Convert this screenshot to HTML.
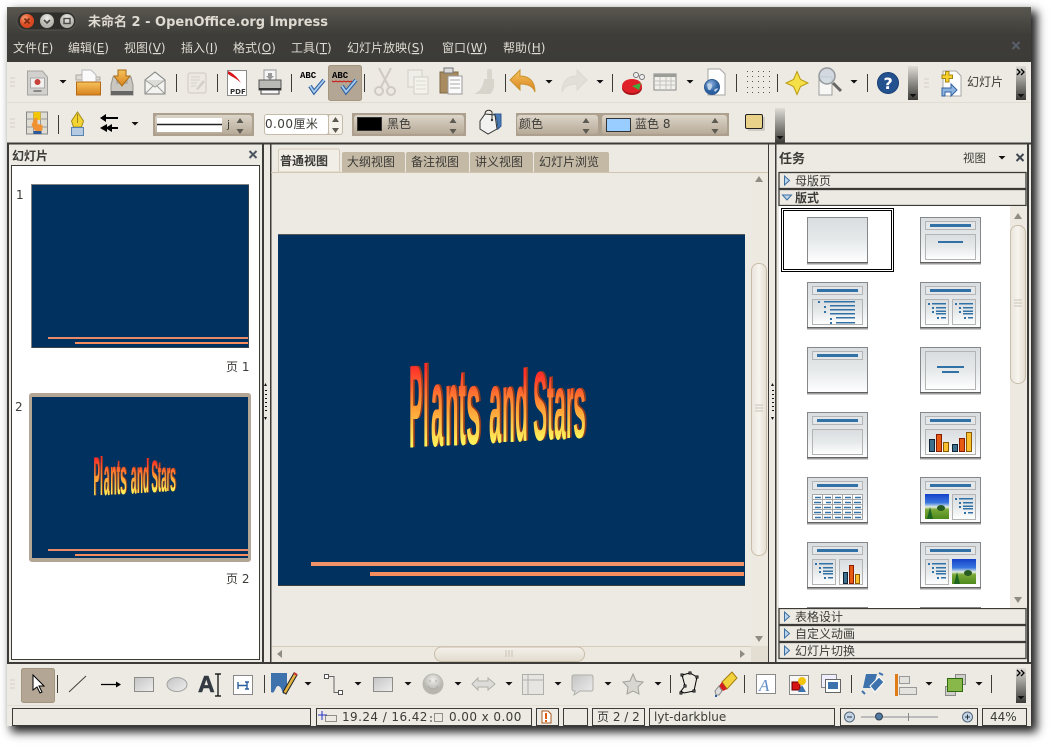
<!DOCTYPE html>
<html lang="zh"><head><meta charset="utf-8"><title>未命名 2 - OpenOffice.org Impress</title>
<style>
html,body{margin:0;padding:0;background:#fff;width:1054px;height:750px;overflow:hidden}
#sh{position:absolute;left:7px;top:7px;width:1024px;height:719px;box-shadow:5px 5px 9px 1px #1e1e1e}
svg{position:absolute;left:0;top:0}
text{font-family:"DejaVu Sans","WenQuanYi Zen Hei","Noto Sans CJK SC",sans-serif;font-size:12px;fill:#3c3b37}
.m{fill:#dfdbd2;font-size:12px}
.b{font-weight:bold}
.s{letter-spacing:.42px}
text.wa{font-family:"Liberation Sans",sans-serif;font-size:100px;font-weight:bold;fill:url(#wag)}
.ex text.wa{fill:#8f3b1e}
</style></head><body><div id="sh"></div>
<svg width="1054" height="750" viewBox="0 0 1054 750" xmlns="http://www.w3.org/2000/svg">
<defs>
<linearGradient id="tb" x1="0" y1="0" x2="0" y2="1"><stop offset="0" stop-color="#5a5750"/><stop offset=".5" stop-color="#3e3d39"/><stop offset="1" stop-color="#3c3b37"/></linearGradient>
<linearGradient id="tan" x1="0" y1="0" x2="0" y2="1"><stop offset="0" stop-color="#dcd5c9"/><stop offset="1" stop-color="#b7aa98"/></linearGradient>
<linearGradient id="ov" x1="0" y1="0" x2="0" y2="1"><stop offset="0" stop-color="#e0ddd7"/><stop offset="1" stop-color="#3c3b37"/></linearGradient>
<linearGradient id="th" x1="0" y1="0" x2="0" y2="1"><stop offset="0" stop-color="#d9dde0"/><stop offset=".5" stop-color="#e6e9ea"/><stop offset="1" stop-color="#fff"/></linearGradient>
<linearGradient id="gr" x1="0" y1="0" x2="1" y2="1"><stop offset="0" stop-color="#c4c4c4"/><stop offset="1" stop-color="#eee"/></linearGradient>
<linearGradient id="or" x1="0" y1="0" x2="0" y2="1"><stop offset="0" stop-color="#f6c35c"/><stop offset="1" stop-color="#d8821e"/></linearGradient>
<linearGradient id="bar" x1="0" y1="0" x2="1" y2="0"><stop offset="0" stop-color="#e9e4db"/><stop offset=".5" stop-color="#f7f4ee"/><stop offset="1" stop-color="#e4ddd1"/></linearGradient>
<linearGradient id="hbar" x1="0" y1="0" x2="0" y2="1"><stop offset="0" stop-color="#f5f2ec"/><stop offset="1" stop-color="#e2dbcf"/></linearGradient>
<linearGradient id="wag" x1="0" y1="0" x2="0" y2="1"><stop offset=".2" stop-color="#ff2f2a"/><stop offset=".5" stop-color="#ff9a35"/><stop offset=".8" stop-color="#fff35a"/></linearGradient>
<radialGradient id="glb" cx=".4" cy=".3"><stop offset="0" stop-color="#8fb4e0"/><stop offset="1" stop-color="#2a5f9f"/></radialGradient>
<radialGradient id="red" cx=".35" cy=".3"><stop offset="0" stop-color="#f59a70"/><stop offset="1" stop-color="#d9481f"/></radialGradient>
<radialGradient id="gry" cx=".5" cy=".3"><stop offset="0" stop-color="#f0efec"/><stop offset="1" stop-color="#b8b5ae"/></radialGradient>
<linearGradient id="sky" x1="0" y1="0" x2="0" y2="1"><stop offset="0" stop-color="#1440c8"/><stop offset=".35" stop-color="#3a78e0"/><stop offset=".52" stop-color="#e4eee0"/><stop offset=".62" stop-color="#7aa838"/><stop offset="1" stop-color="#4e8a1c"/></linearGradient>
<path id="dd" d="M-3.500 0h7l-3.500 3.500z" fill="#111"/>
<path id="spin" d="M-3.500-2h7l-3.500-5zM-3.500 4h7l-3.500 5z" fill="#5d5a52"/>
<symbol id="t0" width="62" height="49" overflow="visible"><rect x=".5" y=".5" width="60" height="45" fill="url(#th)" stroke="#85888a"/><path d="M0 46h61" stroke="#3c3b37" stroke-width="1"/><path d="M0 47.5h61" stroke="#ccc" stroke-width="1"/></symbol>
<symbol id="ti" width="62" height="49" overflow="visible"><rect x="5.5" y="4.5" width="50" height="8" fill="#e3e7e9" stroke="#b4b4b4"/><rect x="10" y="7" width="41" height="3" fill="#3271a6"/></symbol>
<symbol id="bx" width="62" height="49" overflow="visible"><rect x="5.5" y="17.5" width="50" height="25" fill="url(#th)" stroke="#b4b4b4"/></symbol>
<symbol id="bl" width="24" height="26" overflow="visible"><g fill="#3271a6"><rect x="3" y="3" width="2" height="2"/><rect x="7" y="3" width="14" height="1.5"/><rect x="7" y="7" width="2" height="2"/><rect x="11" y="7" width="10" height="1.5"/><rect x="7" y="11" width="2" height="2"/><rect x="11" y="10.5" width="10" height="1.5"/><rect x="11" y="13" width="10" height="1.5"/><rect x="12" y="17" width="2" height="2"/><rect x="16" y="17" width="5" height="1.5"/></g></symbol>
<symbol id="pic" width="24" height="26" overflow="visible"><rect width="24" height="25" fill="url(#sky)"/><path d="M2 25l3-12 3 12z" fill="#1d6420"/><ellipse cx="16" cy="14" rx="4" ry="3" fill="#275b22"/></symbol>
<symbol id="bars" width="24" height="26" overflow="visible"><rect x="4.500" y="12.500" width="4" height="11" fill="#3d6f8f" stroke="#123"/><rect x="10.500" y="5.500" width="4" height="18" fill="#e65a12" stroke="#8a1c00"/><rect x="16.500" y="14.500" width="4" height="9" fill="#fbc02d" stroke="#8a5a00"/></symbol>
</defs>

<!-- window -->
<rect x="7" y="7" width="1024" height="719" fill="#edeae3"/>
<rect x="7" y="7" width="1024" height="55" fill="url(#tb)"/>
<rect x="7" y="7" width="1024" height="1" fill="#5f5c55"/>
<rect x="17" y="12" width="59" height="18" rx="9" fill="#2f2e2b" stroke="#55534d"/>
<circle cx="27" cy="21" r="7" fill="url(#red)"/><path d="M24.500 18.500l5 5m0-5l-5 5" stroke="#7a2c12" stroke-width="1.800"/>
<circle cx="47" cy="21" r="7" fill="url(#gry)"/><path d="M44 20l3 3 3-3" stroke="#4a4944" stroke-width="1.600" fill="none"/>
<circle cx="67" cy="21" r="7" fill="url(#gry)"/><rect x="64" y="18.500" width="6" height="5" fill="none" stroke="#4a4944" stroke-width="1.400"/>
<text x="88" y="26" class="b" style="font-size:13px;fill:#dfdbd2">未命名 2 - OpenOffice.org Impress</text>
<text class="m" x="13" y="52">文件(<tspan text-decoration="underline">F</tspan>)</text>
<text class="m" x="68" y="52">编辑(<tspan text-decoration="underline">E</tspan>)</text>
<text class="m" x="124" y="52">视图(<tspan text-decoration="underline">V</tspan>)</text>
<text class="m" x="181" y="52">插入(<tspan text-decoration="underline">I</tspan>)</text>
<text class="m" x="233" y="52">格式(<tspan text-decoration="underline">O</tspan>)</text>
<text class="m" x="291" y="52">工具(<tspan text-decoration="underline">T</tspan>)</text>
<text class="m" x="347" y="52">幻灯片放映(<tspan text-decoration="underline">S</tspan>)</text>
<text class="m" x="442" y="52">窗口(<tspan text-decoration="underline">W</tspan>)</text>
<text class="m" x="503" y="52">帮助(<tspan text-decoration="underline">H</tspan>)</text>
<path d="M1012.500 42l7 7m0-7l-7 7" stroke="#59606a" stroke-width="2"/>

<!-- toolbar lines -->
<path d="M7 102.500h1024" stroke="#e2ddd2"/>
<path d="M7 143.500h1024" stroke="#3c3b37" stroke-width="2"/>
<path d="M7 663h1024" stroke="#3c3b37" stroke-width="2"/>
<path d="M7 705.500h1024" stroke="#e2ddd2"/>
<!-- grips -->
<g stroke="#d5d0c5"><path d="M10 78h5M10 82h5M10 86h5M10 119h5M10 123h5M10 127h5M10 680h5M10 684h5M10 688h5M924 79h5M924 83h5M924 87h5"/></g>
<!-- separators -->
<path d="M176.500 74v18M217.500 74v18M291.500 74v18M364.500 74v18M505.500 74v18M612.500 74v18M736.500 74v18M777.500 74v18M867.500 74v18M58.500 115v19M57.500 675v18M264.500 675v18M670.500 675v18M744.500 675v18M851.500 675v18M991.500 675v18" stroke="#3c3b37"/>
<!-- overflow -->
<rect x="908" y="66" width="10" height="34" fill="url(#ov)"/><use href="#dd" x="913" y="94"/>
<rect x="1016" y="66" width="10" height="34" fill="url(#ov)"/><use href="#dd" x="1021" y="94"/>
<rect x="775" y="108" width="10" height="35" fill="url(#ov)"/><use href="#dd" x="780" y="136"/>
<rect x="1016" y="668" width="10" height="35" fill="url(#ov)"/><use href="#dd" x="1021" y="696"/>
<path d="M1017 69l3 3-3 3M1021 69l3 3-3 3M1017 670l3 3-3 3M1021 670l3 3-3 3" fill="none" stroke="#000" stroke-width="1.300"/>
<rect x="328.500" y="65.500" width="33" height="35" rx="2" fill="#b3a695" stroke="#a4967f"/>
<rect x="21.500" y="668.500" width="33" height="34" rx="2" fill="#b3a695" stroke="#a4967f"/>

<!-- dropdown arrows -->
<use href="#dd" x="63" y="80"/><use href="#dd" x="549" y="80"/><use href="#dd" x="600" y="80"/><use href="#dd" x="690" y="80"/><use href="#dd" x="854" y="80"/><use href="#dd" x="135" y="122"/>
<use href="#dd" x="308" y="682"/><use href="#dd" x="358" y="682"/><use href="#dd" x="408" y="682"/><use href="#dd" x="458" y="682"/><use href="#dd" x="509" y="682"/><use href="#dd" x="558" y="682"/><use href="#dd" x="608" y="682"/><use href="#dd" x="658" y="682"/><use href="#dd" x="929" y="682"/><use href="#dd" x="979" y="682"/>

<!-- toolbar1 icons -->
<g transform="translate(37.500,83)"><path d="M-10-12H5l5 6v18H-10z" fill="#d2d1cd" stroke="#a5a4a0"/><rect x="-7" y="-5" width="14" height="10" fill="#f2f0ee" stroke="#aaa"/><circle cx="0" cy="-1" r="3" fill="#c8413a"/><path d="M-4 8h8" stroke="#888" stroke-width="2"/></g>
<g transform="translate(89,83)"><path d="M-13-8h5l2-3H-1v5h12v3h-24z" fill="#e0dbd0" stroke="#aaa"/><path d="M-7-13H2l5 5V0H-7z" fill="#fafafa" stroke="#bbb"/><rect x="-12.500" y="-1" width="24" height="13" fill="url(#or)" stroke="#b46a14"/></g>
<g transform="translate(122,83)"><path d="M-11 2l2-8h4v6h10v-6h4l2 8v10h-22z" fill="#c9c7c0" stroke="#95938c"/><rect x="-11" y="8" width="22" height="4" fill="#666"/><path d="M-4-13h8v6h4L0 3-8-7h4z" fill="url(#or)" stroke="#a96a10"/></g>
<g transform="translate(155,83)"><path d="M-10-3L0-11 10-3V11H-10z" fill="#f3f3f1" stroke="#7d7d7b"/><path d="M-10-3L0 4 10-3M-10 11L-2 3M10 11L2 3" fill="#dcdcd9" stroke="#9d9d9a"/></g>
<g transform="translate(197,83)"><rect x="-9" y="-10" width="18" height="20" rx="2" fill="#ece9e3" stroke="#cfcbc2"/><path d="M-6-6h9M-6-3h9M-6 0h6M-6 3h5" stroke="#d5d1c8"/><path d="M-1 6l7-9 2 2-7 8z" fill="#d4d0c8"/></g>
<g transform="translate(237,83)"><rect x="-9.500" y="-12.500" width="19" height="25" fill="#fff" stroke="#8c8c8a"/><path d="M-9-12c5 2 10 7 13 12-5-5-9-6-13-9z" fill="#d6141a"/><text x="-7" y="11" style="font-size:7px;font-weight:bold;fill:#333">PDF</text></g>
<g transform="translate(270,82)"><rect x="-6" y="-12" width="12" height="11" fill="#f5f5f5" stroke="#999"/><path d="M-2-9h4v3h2l-4 4-4-4h2z" fill="#999"/><path d="M-11-2h22v10h-22z" fill="#b9b9b6" stroke="#555"/><rect x="-9" y="8" width="18" height="4" fill="#f7f7f7" stroke="#444"/><path d="M-11 7h22" stroke="#333" stroke-width="2"/></g>
<g transform="translate(312,82)"><text x="-12" y="-4" style="font-size:9px;font-weight:bold;fill:#000;font-family:'Liberation Mono',monospace">ABC</text><path d="M-2 4l4 6L12-2" fill="none" stroke="#2f5f9f" stroke-width="4"/><path d="M-2 4l4 6L12-2" fill="none" stroke="#a8cdf0" stroke-width="1.800"/></g>
<g transform="translate(344,82)"><text x="-12" y="-4" style="font-size:9px;font-weight:bold;fill:#000;font-family:'Liberation Mono',monospace">ABC</text><path d="M-12-1l2 1 2-1 2 1 2-1 2 1 2-1 2 1 2-1 2 1 2-1" fill="none" stroke="#d01010"/><path d="M-2 4l4 6L12-2" fill="none" stroke="#2f5f9f" stroke-width="4"/><path d="M-2 4l4 6L12-2" fill="none" stroke="#a8cdf0" stroke-width="1.800"/></g>
<g transform="translate(385,82)" fill="none" stroke="#cfcbc3" stroke-width="2"><path d="M-6-14L4 5M6-14L-4 5"/><circle cx="-6" cy="9" r="4"/><circle cx="6" cy="9" r="4"/></g>
<g transform="translate(418,82)"><rect x="-10" y="-12" width="14" height="17" fill="#f0eee9" stroke="#d2cfc7"/><rect x="-4" y="-5" width="14" height="17" fill="#f4f2ed" stroke="#d2cfc7"/><path d="M-2-1h10M-2 3h10M-2 7h10" stroke="#dcd9d1"/></g>
<g transform="translate(451,82)"><rect x="-11" y="-10" width="18" height="21" fill="#a98b60" stroke="#7e6846"/><rect x="-7" y="-14" width="9" height="5" fill="#ddd" stroke="#777"/><rect x="-3" y="-6" width="14" height="18" fill="#fbfbfb" stroke="#999"/><path d="M-1-2h10M-1 2h10M-1 6h10" stroke="#aaa"/></g>
<g transform="translate(484,82)"><rect x="3" y="-13" width="5" height="11" rx="2" fill="#d9d6ce"/><path d="M0-3h10v6c0 4-2 8-4 9H-10c5-2 9-6 10-15z" fill="#d7d4cc"/></g>
<g transform="translate(523,82)"><path d="M-13-2L-3-12V-6c8 0 15 4 15 16-2-5-6-8-15-8V8z" fill="url(#or)" stroke="#c99330"/></g>
<g transform="translate(574,82)"><path d="M13-2L3-12V-6c-8 0-15 4-15 16 2-5 6-8 15-8V8z" fill="#e2dfd8" stroke="#dcd9d1"/></g>
<g transform="translate(632,83)"><ellipse cx="0" cy="5" rx="10" ry="7" fill="#a8141a"/><ellipse cx="0" cy="3" rx="10" ry="7" fill="#e02028"/><path d="M0 3L9 0 7 7z" fill="#3fae3c"/><circle cx="4" cy="-8" r="2.500" fill="#eee" stroke="#777"/><circle cx="10" cy="-6" r="2.500" fill="#eee" stroke="#777"/></g>
<g transform="translate(665,82)"><rect x="-11" y="-8" width="22" height="16" fill="#f1f0ec" stroke="#888"/><rect x="-11" y="-8" width="22" height="3" fill="#9d9d98"/><path d="M-11-1h22M-11 3h22M-5-5V8M1-5V8M6-5V8" stroke="#c4c2bc"/></g>
<g transform="translate(716,83)"><path d="M-8-14H4l5 5V12H-8z" fill="#fff" stroke="#a5a5a3"/><circle cx="-4" cy="4" r="7.500" fill="url(#glb)" stroke="#2c5a92"/><path d="M-9 1c3-2 6 0 5 3s-3 4-4 2zM-2 7c2-2 4-2 4-1l-3 3z" fill="#bcd0e6"/></g>
<g fill="#55534c"><path d="M747 71h1v1h-1zM758 71h1v1h-1zM769 71h1v1h-1zM747 81h1v1h-1zM758 81h1v1h-1zM769 81h1v1h-1zM747 92h1v1h-1zM758 92h1v1h-1zM769 92h1v1h-1zM752 71h1v1h-1zM763 71h1v1h-1zM752 81h1v1h-1zM763 81h1v1h-1zM752 92h1v1h-1zM763 92h1v1h-1zM747 76h1v1h-1zM752 76h1v1h-1zM758 76h1v1h-1zM763 76h1v1h-1zM769 76h1v1h-1zM747 87h1v1h-1zM752 87h1v1h-1zM758 87h1v1h-1zM763 87h1v1h-1zM769 87h1v1h-1z"/></g>
<g transform="translate(797,83)"><path d="M0-11.500L3.500-3.500 11 0 3.500 3.500 0 11.500-3.500 3.500-11 0-3.500-3.500z" fill="#f6e04a" stroke="#b99b10"/></g>
<g transform="translate(830,82)"><rect x="-11" y="-5" width="13" height="18" fill="#f7f7f5" stroke="#9d9d9a"/><circle cx="-3" cy="-6" r="8" fill="#cbd5de" fill-opacity=".8" stroke="#95989a" stroke-width="1.500"/><path d="M3 1l8 8" stroke="#666" stroke-width="3"/></g>
<g transform="translate(888,83)"><circle r="10.500" fill="#23528f" stroke="#1a3f74"/><text x="-4.500" y="6" style="font-size:16px;font-weight:bold;fill:#fff">?</text></g>
<g transform="translate(950,83)"><path d="M-7-12H6l5 5V13H-7z" fill="#fff" stroke="#a5a5a3"/><path d="M-8-8h3.500v-3.500h3.500v3.500h3.500v3.500h-3.500v3.500h-3.500v-3.500h-3.500z" fill="#f8d02c" stroke="#a68713"/><path d="M-8 5h9V1l6 6-6 6V9H-5v4h-3z" fill="#8db3e0" stroke="#33639e"/></g>
<text x="967" y="86">幻灯片</text>

<!-- toolbar2 -->
<g transform="translate(36.500,123)"><rect x="-10" y="-11" width="21" height="22" fill="#dfdcd3" stroke="#888"/><path d="M-3-11v22M4-11v22M-10-4h21M-10 4h21" stroke="#999"/><rect x="-3" y="-11" width="7" height="8" fill="#f2c70a"/><path d="M-2-5h3v6l5 1v5c-2 2-6 2-8 0l-3-5z" fill="#f09232"/><rect x="-3" y="8" width="8" height="3" fill="#2e5a9a"/></g>
<g transform="translate(77.500,124)"><path d="M0-12L6-3 4 3h-8L-6-3z" fill="#f4d432" stroke="#a58a1c"/><path d="M0-10V-1" stroke="#a58a1c"/><rect x="-6" y="3.500" width="12" height="8" fill="#b5cbe2" stroke="#5a82ae"/></g>
<path d="M100 118l6-4v3h12v2h-12v3zM100 128l7-4v3l5-3v3h6v2h-6v3l-5-3v3z" fill="#000"/>
<rect x="153" y="113" width="101" height="23" fill="#ada08f"/><rect x="155" y="115" width="97" height="19" rx="3" fill="url(#tan)"/>
<rect x="157" y="118" width="65" height="14" fill="#fff"/><path d="M157 124.500h65" stroke="#222" stroke-width="1.500"/>
<text x="227" y="128" style="font-size:11px">j</text><use href="#spin" x="240" y="125"/>
<rect x="264" y="114" width="79" height="21" rx="3" fill="#c5bba9"/><rect x="265" y="115" width="63" height="19" rx="2" fill="#fff"/><rect x="329" y="115" width="13" height="19" rx="2" fill="#f5f2ec"/><use href="#spin" x="335.500" y="124"/>
<text x="265" y="128" class="s">0.00厘米</text>
<rect x="352" y="113" width="114" height="23" fill="#ada08f"/><rect x="354" y="115" width="110" height="19" rx="3" fill="url(#tan)"/>
<rect x="357.500" y="117.500" width="24" height="13" fill="#000" stroke="#333"/><text x="387" y="128">黑色</text><use href="#spin" x="453" y="125"/>
<g transform="translate(489,123)"><path d="M5-9h7v12l-3 3-1-9z" fill="#4a78b0" stroke="#2c5a92"/><path d="M-9-2L-4-9 6-8 8 6-1 11-9 6z" fill="#f2f2f0" stroke="#333"/><path d="M-4-9c0-4 5-5 7-2l0 7" fill="none" stroke="#333"/><circle cx="3" cy="-3" r="1.200" fill="#333"/></g>
<rect x="516" y="113" width="84" height="23" fill="#ada08f"/><rect x="517" y="115" width="81" height="19" rx="3" fill="url(#tan)"/><text x="519" y="128">颜色</text><use href="#spin" x="586" y="125"/>
<rect x="600" y="113" width="129" height="23" fill="#ada08f"/><rect x="602" y="115" width="125" height="19" rx="3" fill="url(#tan)"/>
<rect x="606.500" y="118.500" width="24" height="13" fill="#9cf" stroke="#333"/><text x="635" y="128">蓝色 8</text><use href="#spin" x="715" y="125"/>
<rect x="745.500" y="114.500" width="17" height="14" rx="1.500" fill="#e9d18a" stroke="#222"/><path d="M748 130h16v-13" stroke="#b5b0a5" fill="none"/>

<!-- left panel -->
<rect x="7" y="144" width="2" height="519" fill="#3c3b37"/>
<text x="12" y="160" class="b">幻灯片</text>
<path d="M249.500 151l7 7m0-7l-7 7" stroke="#4c5460" stroke-width="2"/>
<rect x="11.500" y="165.500" width="248" height="494" fill="#fff" stroke="#3c3b37"/>
<rect x="262" y="144" width="2" height="519" fill="#3c3b37"/>
<text x="16" y="199">1</text>
<rect x="31.500" y="184.500" width="217" height="163" fill="#00315f" stroke="#7f8080"/><path d="M32 347.500h217M248.500 185v162" stroke="#34424f"/>
<rect x="48" y="337" width="200" height="2" fill="#e98a66"/><rect x="75" y="342" width="173" height="2" fill="#f78c5e"/>
<text x="226" y="371">页 1</text>
<text x="15" y="411">2</text>
<rect x="29" y="393" width="222" height="169" rx="3" fill="#b3a695"/>
<rect x="32" y="397" width="216" height="161" fill="#00315f"/>
<rect x="48" y="549" width="200" height="2" fill="#e98a66"/><rect x="75" y="554" width="173" height="2" fill="#f78c5e"/>
<text x="226" y="583">页 2</text>

<!-- thumb wordart -->
<g transform="translate(93.500,458) scale(.466,.466) translate(-409,-367)">
<g class="ex" transform="translate(2,-.5)">
<text class="wa" transform="translate(409,447.500) scale(.2,1.18)">P</text><text class="wa" transform="translate(423,446.700) scale(.2,1.15)">l</text><text class="wa" transform="translate(431,446.200) scale(.22,1.14)">a</text><text class="wa" transform="translate(445,445.300) scale(.22,1.12)">n</text><text class="wa" transform="translate(458.500,444.500) scale(.22,1.1)">t</text><text class="wa" transform="translate(466,444) scale(.26,1.08)">s</text><text class="wa" transform="translate(489,442.700) scale(.22,1.05)">a</text><text class="wa" transform="translate(502,441.900) scale(.21,1.03)">n</text><text class="wa" transform="translate(515,441.100) scale(.21,1.01)">d</text><text class="wa" transform="translate(533,440) scale(.21,.98)">S</text><text class="wa" transform="translate(547,439.200) scale(.2,.96)">t</text><text class="wa" transform="translate(554,438.800) scale(.21,.95)">a</text><text class="wa" transform="translate(566,438) scale(.19,.93)">r</text><text class="wa" transform="translate(573,437.600) scale(.23,.915)">s</text>
</g>
<text class="wa" transform="translate(409,447.500) scale(.2,1.18)">P</text><text class="wa" transform="translate(423,446.700) scale(.2,1.15)">l</text><text class="wa" transform="translate(431,446.200) scale(.22,1.14)">a</text><text class="wa" transform="translate(445,445.300) scale(.22,1.12)">n</text><text class="wa" transform="translate(458.500,444.500) scale(.22,1.1)">t</text><text class="wa" transform="translate(466,444) scale(.26,1.08)">s</text><text class="wa" transform="translate(489,442.700) scale(.22,1.05)">a</text><text class="wa" transform="translate(502,441.900) scale(.21,1.03)">n</text><text class="wa" transform="translate(515,441.100) scale(.21,1.01)">d</text><text class="wa" transform="translate(533,440) scale(.21,.98)">S</text><text class="wa" transform="translate(547,439.200) scale(.2,.96)">t</text><text class="wa" transform="translate(554,438.800) scale(.21,.95)">a</text><text class="wa" transform="translate(566,438) scale(.19,.93)">r</text><text class="wa" transform="translate(573,437.600) scale(.23,.915)">s</text>
</g>

<!-- main panel -->
<rect x="270" y="144" width="1.500" height="519" fill="#3c3b37"/>
<path d="M271 172.500h498" stroke="#cfc4ae"/>
<path d="M278.500 172v-21q0-2 2-2h57q2 0 2 2v21z" fill="#f1eee8" stroke="#d6ccba"/>
<g fill="#c4b9a5"><path d="M342 172v-18q0-2 2-2h59q2 0 2 2v18z"/><path d="M406 172v-18q0-2 2-2h59q2 0 2 2v18z"/><path d="M470 172v-18q0-2 2-2h59q2 0 2 2v18z"/><path d="M534 172v-18q0-2 2-2h71q2 0 2 2v18z"/></g>
<text x="280" y="165" class="b">普通视图</text>
<text x="347" y="166">大纲视图</text><text x="411" y="166">备注视图</text><text x="475" y="166">讲义视图</text><text x="539" y="166">幻灯片浏览</text>
<rect x="278" y="234.500" width="467" height="351" fill="#00315f"/><path d="M278 234.500h467" stroke="#55595c"/><path d="M278 585.500h467" stroke="#3b3f42"/>
<rect x="311" y="562" width="433" height="4" fill="#f09368"/><rect x="370" y="572" width="374" height="4" fill="#f78c5e"/>

<g class="ex" transform="translate(1.800,-.5)">
<text class="wa" transform="translate(409,447.500) scale(.2,1.18)">P</text><text class="wa" transform="translate(423,446.700) scale(.2,1.15)">l</text><text class="wa" transform="translate(431,446.200) scale(.22,1.14)">a</text><text class="wa" transform="translate(445,445.300) scale(.22,1.12)">n</text><text class="wa" transform="translate(458.500,444.500) scale(.22,1.1)">t</text><text class="wa" transform="translate(466,444) scale(.26,1.08)">s</text><text class="wa" transform="translate(489,442.700) scale(.22,1.05)">a</text><text class="wa" transform="translate(502,441.900) scale(.21,1.03)">n</text><text class="wa" transform="translate(515,441.100) scale(.21,1.01)">d</text><text class="wa" transform="translate(533,440) scale(.21,.98)">S</text><text class="wa" transform="translate(547,439.200) scale(.2,.96)">t</text><text class="wa" transform="translate(554,438.800) scale(.21,.95)">a</text><text class="wa" transform="translate(566,438) scale(.19,.93)">r</text><text class="wa" transform="translate(573,437.600) scale(.23,.915)">s</text>
</g>
<text class="wa" transform="translate(409,447.500) scale(.2,1.18)">P</text><text class="wa" transform="translate(423,446.700) scale(.2,1.15)">l</text><text class="wa" transform="translate(431,446.200) scale(.22,1.14)">a</text><text class="wa" transform="translate(445,445.300) scale(.22,1.12)">n</text><text class="wa" transform="translate(458.500,444.500) scale(.22,1.1)">t</text><text class="wa" transform="translate(466,444) scale(.26,1.08)">s</text><text class="wa" transform="translate(489,442.700) scale(.22,1.05)">a</text><text class="wa" transform="translate(502,441.900) scale(.21,1.03)">n</text><text class="wa" transform="translate(515,441.100) scale(.21,1.01)">d</text><text class="wa" transform="translate(533,440) scale(.21,.98)">S</text><text class="wa" transform="translate(547,439.200) scale(.2,.96)">t</text><text class="wa" transform="translate(554,438.800) scale(.21,.95)">a</text><text class="wa" transform="translate(566,438) scale(.19,.93)">r</text><text class="wa" transform="translate(573,437.600) scale(.23,.915)">s</text>

<!-- main scrollbars -->
<rect x="751" y="173" width="17" height="473" fill="#eee9e0"/>
<rect x="751.500" y="263.500" width="15" height="292" rx="7" fill="url(#bar)" stroke="#c8bda8"/>
<path d="M755 182h8l-4-6zM755 636h8l-4 6z" fill="#8f8c84"/>
<path d="M755 405h8M755 408h8M755 411h8" stroke="#c9c3b6"/>
<rect x="272" y="646" width="479" height="16" fill="#eee9e0"/><path d="M272 646.500h479" stroke="#d6ccba"/>
<rect x="434.500" y="647" width="150" height="14.500" rx="7" fill="url(#hbar)" stroke="#c8bda8"/>
<path d="M282 650v8l-5-4zM740 650v8l5-4z" fill="#8f8c84"/>
<path d="M506 650v7M509 650v7M512 650v7" stroke="#c9c3b6"/>
<rect x="751" y="646" width="17" height="16" fill="#e3ddd2"/>
<path d="M768.500 144v519" stroke="#3c3b37"/>
<!-- splitter handles -->
<g fill="#111"><path d="M264 386h3l-1.500-3zM264 417h3l-1.500 3zM771 386h3l-1.500-3zM771 417h3l-1.500 3z"/><path d="M265 390h2v1h-2zM265 394h2v1h-2zM265 398h2v1h-2zM265 402h2v1h-2zM265 406h2v1h-2zM265 410h2v1h-2zM772 390h2v1h-2zM772 394h2v1h-2zM772 398h2v1h-2zM772 402h2v1h-2zM772 406h2v1h-2zM772 410h2v1h-2z"/></g>

<!-- task panel -->
<rect x="775" y="144" width="1.500" height="519" fill="#3c3b37"/>
<rect x="1027" y="144" width="2" height="519" fill="#3c3b37"/>
<text x="779" y="163" class="b" style="font-size:13px">任务</text>
<text x="963" y="162" style="font-size:11.500px">视图</text><use href="#dd" x="1002" y="156"/>
<path d="M1016.500 154l7 7m0-7l-7 7" stroke="#3f4650" stroke-width="2"/>
<g fill="#edeae3" stroke="#3c3b37" stroke-width="1.300"><rect x="779" y="172.500" width="247" height="16"/><rect x="779" y="189.500" width="247" height="16"/><rect x="779" y="608.500" width="247" height="16"/><rect x="779" y="625.500" width="247" height="16"/><rect x="779" y="642.500" width="247" height="16"/></g>
<g fill="#bcd5ee" stroke="#3d6f9f"><path d="M784.500 176v9l5-4.500zM784.500 612v9l5-4.500zM784.500 629v9l5-4.500zM784.500 646v9l5-4.500z"/><path d="M782.500 195h9l-4.500 5z"/></g>
<text x="795" y="185">母版页</text><text x="795" y="202" class="b">版式</text><text x="795" y="621">表格设计</text><text x="795" y="638">自定义动画</text><text x="795" y="655">幻灯片切换</text>
<rect x="779" y="206" width="231" height="402" fill="#fff"/>
<rect x="1010" y="206" width="16" height="402" fill="#eee9e0"/>
<rect x="1010.500" y="225.500" width="15" height="158" rx="7" fill="url(#bar)" stroke="#c8bda8"/>
<path d="M1014 219h8l-4-6zM1014 597h8l-4 6z" fill="#8f8c84"/>
<path d="M1014 300h8M1014 303h8M1014 306h8" stroke="#c9c3b6"/>
<rect x="781.500" y="208.500" width="112" height="63" fill="none" stroke="#000"/><rect x="783.500" y="210.500" width="108" height="59" fill="none" stroke="#000"/>

<!-- layout thumbs -->
<use href="#t0" x="807" y="217"/>
<use href="#t0" x="920" y="217"/><use href="#ti" x="920" y="217"/><use href="#bx" x="920" y="217"/><rect x="938" y="241" width="25" height="2" fill="#3271a6"/>
<use href="#t0" x="807" y="282"/><use href="#ti" x="807" y="282"/><use href="#bx" x="807" y="282"/>
<g fill="#3271a6"><rect x="818" y="301" width="2" height="2"/><rect x="824" y="301" width="31" height="1.500"/><rect x="824" y="306" width="2" height="2"/><rect x="830" y="305" width="25" height="1.500"/><rect x="830" y="309" width="25" height="1.500"/><rect x="824" y="311" width="2" height="2"/><rect x="830" y="313" width="25" height="1.500"/><rect x="830" y="318" width="2" height="2"/><rect x="836" y="317" width="19" height="1.500"/><rect x="830" y="322" width="2" height="2"/><rect x="836" y="322" width="19" height="1.500"/></g>
<use href="#t0" x="920" y="282"/><use href="#ti" x="920" y="282"/><rect x="925.500" y="299.500" width="23" height="25" fill="url(#th)" stroke="#b4b4b4"/><rect x="952.500" y="299.500" width="23" height="25" fill="url(#th)" stroke="#b4b4b4"/><use href="#bl" x="925" y="300"/><use href="#bl" x="952" y="300"/>
<use href="#t0" x="807" y="347"/><use href="#ti" x="807" y="347"/>
<use href="#t0" x="920" y="347"/><rect x="925.500" y="351.500" width="50" height="38" fill="url(#th)" stroke="#b4b4b4"/><rect x="937" y="366" width="27" height="2" fill="#3271a6"/><rect x="942" y="371" width="17" height="2" fill="#3271a6"/>
<use href="#t0" x="807" y="412"/><use href="#ti" x="807" y="412"/><use href="#bx" x="807" y="412"/>
<use href="#t0" x="920" y="412"/><use href="#ti" x="920" y="412"/><use href="#bx" x="920" y="412"/>
<g stroke-width="1"><rect x="929.500" y="439.500" width="5" height="12" fill="#3d6f8f" stroke="#123"/><rect x="936.500" y="434.500" width="5" height="17" fill="#e65a12" stroke="#8a1c00"/><rect x="943.500" y="442.500" width="5" height="9" fill="#fbc02d" stroke="#8a5a00"/><rect x="952.500" y="444.500" width="5" height="7" fill="#3d6f8f" stroke="#123"/><rect x="959.500" y="438.500" width="5" height="13" fill="#e65a12" stroke="#8a1c00"/><rect x="966.500" y="432.500" width="5" height="19" fill="#fbc02d" stroke="#8a5a00"/></g>
<use href="#t0" x="807" y="477"/><use href="#ti" x="807" y="477"/>
<rect x="812.500" y="494.500" width="50" height="25" fill="#fff" stroke="#a5a5a5"/><path d="M812 499.500h51M812 504.500h51M812 509.500h51M812 514.500h51M822.500 494v26M832.500 494v26M842.500 494v26M852.500 494v26" stroke="#a5a5a5"/>
<path d="M815 497.500h6M825 497.500h6M835 497.500h6M845 497.500h6M855 497.500h6M814 502.500h7M826 502.500h5M834 502.500h7M845 502.500h6M854 502.500h7M815 507.500h6M824 507.500h7M835 507.500h6M844 507.500h7M855 507.500h6M814 512.500h7M825 512.500h6M834 512.500h7M845 512.500h6M854 512.500h7M815 517.500h6M824 517.500h7M835 517.500h6M844 517.500h7M855 517.500h6" stroke="#3271a6" stroke-width="1.500"/>
<use href="#t0" x="920" y="477"/><use href="#ti" x="920" y="477"/><use href="#pic" x="925" y="494"/><rect x="952.500" y="494.500" width="23" height="25" fill="url(#th)" stroke="#b4b4b4"/><use href="#bl" x="952" y="495"/>
<use href="#t0" x="807" y="542"/><use href="#ti" x="807" y="542"/><rect x="812.500" y="559.500" width="23" height="25" fill="url(#th)" stroke="#b4b4b4"/><rect x="839.500" y="559.500" width="23" height="25" fill="url(#th)" stroke="#b4b4b4"/><use href="#bl" x="812" y="560"/><use href="#bars" x="839" y="560"/>
<use href="#t0" x="920" y="542"/><use href="#ti" x="920" y="542"/><rect x="925.500" y="559.500" width="23" height="25" fill="url(#th)" stroke="#b4b4b4"/><use href="#bl" x="925" y="560"/><use href="#pic" x="952" y="559"/>
<path d="M807 607.500h61M920 607.500h61" stroke="#85888a"/>

<!-- toolbar 3 -->
<path d="M33 675v15l4-3 3 6 2-1-3-6h5z" fill="#fff" stroke="#000"/>
<path d="M69 692l17-16" stroke="#444" stroke-width="1"/>
<path d="M101 684.500h17" stroke="#000" stroke-width="1.300"/><path d="M116 681.500l5 3-5 3z" fill="#000"/>
<rect x="134.500" y="677.500" width="19" height="14" fill="url(#gr)" stroke="#8c8c88"/>
<ellipse cx="177" cy="684.500" rx="10" ry="7" fill="url(#gr)" stroke="#a3a3a0"/>
<text x="198" y="692" style="font-size:23px;font-weight:bold;fill:#333a42;stroke:#333a42;stroke-width:.6;font-family:'Liberation Sans',sans-serif">A</text><path d="M215 674h6m-3 0v22m-3 0h6" stroke="#000" stroke-width="1.200" fill="none"/>
<rect x="233.500" y="675.500" width="19" height="19" fill="#fff" stroke="#888"/><path d="M238 682v7m0-3.500h9m-2-3.500h4m-2 0v7m-2 0h4" stroke="#2a5f9f" stroke-width="1.400" fill="none"/>
<g transform="translate(284,684)"><path d="M-13-11v19c4 3 4-6 7-6 4 0 4 8 6 8l3-8v-13z" fill="#3e72ad"/><path d="M-1 8L10-11l3 2L2 10z" fill="#e3b341" stroke="#222"/><path d="M10-11l3 2" stroke="#c33" stroke-width="2"/></g>
<rect x="324.500" y="674.500" width="4" height="4" fill="#fff" stroke="#555"/><path d="M328 676.500h6v16h4" fill="none" stroke="#666"/><rect x="338.500" y="690.500" width="4" height="4" fill="#fff" stroke="#555"/>
<rect x="373.500" y="677.500" width="19" height="14" fill="url(#gr)" stroke="#8c8c88"/>
<circle cx="433" cy="684" r="10" fill="url(#gry)" stroke="#bbb9b3"/><path d="M428 686c2 4 8 4 10 0" fill="none" stroke="#aaa"/><path d="M429 681h2M435 681h2" stroke="#aaa"/>
<path d="M472 684l6-6v3h10v-3l7 6-7 6v-3h-10v3z" fill="#dedcd8" stroke="#b1afaa"/>
<rect x="522.500" y="674.500" width="21" height="20" fill="#e6e5e1" stroke="#b1afaa"/><path d="M528 675v19M523 680h20" stroke="#b1afaa"/>
<path d="M574 675h17q2 0 2 2v12q0 2-2 2h-11l-6 4 1-4q-3 0-3-2v-12q0-2 2-2z" fill="url(#gr)" stroke="#b1afaa"/>
<path d="M633 674l3 7 7 1-5 5 1 7-6-3-6 3 1-7-5-5 7-1z" fill="#d8d6d1" stroke="#a3a19b"/>
<path d="M682 675l8-2 7 4-3 14-10 2-3-2 4-5z" fill="none" stroke="#000"/><g fill="#fff" stroke="#000"><rect x="681" y="674" width="2" height="2"/><rect x="689" y="672" width="2" height="2"/><rect x="696" y="676" width="2" height="2"/><rect x="693" y="690" width="2" height="2"/><rect x="680" y="692" width="2" height="2"/><rect x="684" y="685" width="2" height="2"/></g>
<g transform="translate(726,684)"><path d="M-4-2L6-12l5 6L1 5z" fill="#f3d33b" stroke="#a57c10"/><path d="M-4-2l5 7-4 2-4-5z" fill="#d21f1f"/><path d="M-7 2l3 5-3 4h-3l-1-4z" fill="#ddd" stroke="#888"/><path d="M-10 11v2" stroke="#2a5f9f" stroke-width="2"/></g>
<rect x="756.500" y="674.500" width="19" height="19" fill="#fff" stroke="#888"/><text x="759" y="691" style="font-size:17px;font-style:italic;fill:#5f8cc8;font-family:'Liberation Serif',serif">A</text>
<rect x="789.500" y="675.500" width="19" height="19" fill="#f7f7f5" stroke="#888"/><rect x="792" y="682" width="8" height="8" fill="#d61515" stroke="#600"/><circle cx="802" cy="681" r="4" fill="#f2c40e"/><path d="M798 692l4-7 4 7z" fill="#3e72ad"/>
<rect x="821.500" y="674.500" width="15" height="13" fill="#eef" stroke="#888"/><rect x="825.500" y="679.500" width="15" height="13" fill="#fff" stroke="#666"/><rect x="828" y="682" width="10" height="7" fill="#3e72ad"/>
<g transform="translate(873,684)"><path d="M-7-10H4L0 4H-10z" fill="#3e72ad"/><path d="M-3 2L6-7l5 5L2 8z" fill="#3e72ad" stroke="#fff"/><path d="M6-11l4 2M-11 7l3 3" stroke="#3e72ad" stroke-width="2"/></g>
<rect x="895" y="674" width="3" height="22" fill="#e07b18"/><rect x="899.500" y="676.500" width="10" height="7" fill="#e4e2dd" stroke="#999"/><rect x="899.500" y="687.500" width="17" height="7" fill="#e4e2dd" stroke="#999"/>
<rect x="955.500" y="674.500" width="10" height="10" fill="#cfcdc8" stroke="#888"/><rect x="945.500" y="686.500" width="10" height="9" fill="#cfcdc8" stroke="#888"/><rect x="947.500" y="678.500" width="15" height="13" fill="#88b84a" stroke="#2f6a10"/>

<!-- status -->
<g fill="#edeae3" stroke="#3c3b37"><rect x="12.500" y="708.500" width="298" height="17"/><rect x="316.500" y="708.500" width="215" height="17"/><rect x="536.500" y="708.500" width="22" height="17"/><rect x="563.500" y="708.500" width="24" height="17"/><rect x="592.500" y="708.500" width="52" height="17"/><rect x="649.500" y="708.500" width="185" height="17"/><rect x="840.500" y="708.500" width="137" height="17"/><rect x="982.500" y="708.500" width="44" height="17"/></g>
<path d="M322 711v9M318 715h9" stroke="#2234c8"/><rect x="325.500" y="715.500" width="11" height="6" fill="none" stroke="#333" stroke-dasharray="1 1"/>
<text x="342" y="721" class="s">19.24 / 16.42</text>
<rect x="434.500" y="713.500" width="8" height="8" fill="none" stroke="#333" stroke-dasharray="1 1"/><path d="M431 716v2M431 720v2" stroke="#333"/>
<text x="449" y="721" class="s">0.00 x 0.00</text>
<path d="M542 711h6l3 3v9h-9z" fill="#fff" stroke="#a55a20"/><rect x="545" y="713" width="2" height="6" fill="#e05a10"/><rect x="545" y="720" width="2" height="2" fill="#e05a10"/>
<text x="597" y="721">页 2 / 2</text>
<text x="654" y="721">lyt-darkblue</text>
<circle cx="849.500" cy="717" r="5" fill="#c5d5e6" stroke="#567"/><path d="M847 717h5" stroke="#234"/>
<path d="M861 717h77" stroke="#bbb" stroke-width="2"/><path d="M908.500 713v8" stroke="#888"/>
<circle cx="879" cy="716.500" r="3.500" fill="#52799f" stroke="#345"/>
<circle cx="967.500" cy="717" r="5" fill="#c5d5e6" stroke="#567"/><path d="M965 717h5M967.500 714.500v5" stroke="#234"/>
<text x="990" y="721">44%</text>
</svg>
</body></html>
